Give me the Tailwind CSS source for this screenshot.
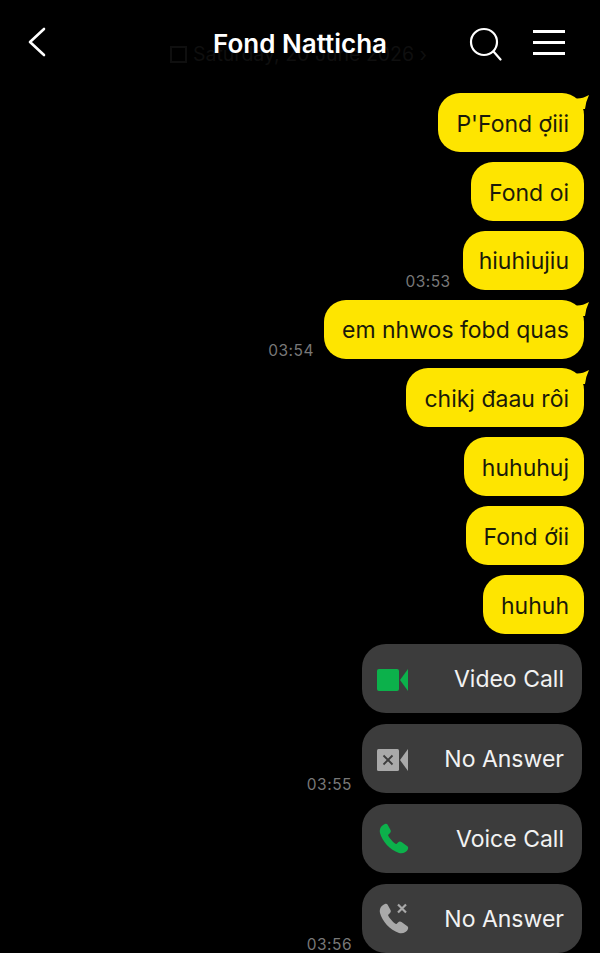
<!DOCTYPE html>
<html lang="en">
<head>
    <meta charset="UTF-8" />
    <meta name="viewport" content="width=device-width, initial-scale=1.0" />
    <title>Fond Natticha</title>
    <script src="https://cdn.jsdelivr.net/npm/@tailwindcss/browser@4"></script>
</head>
<body class="bg-black h-[953px] w-[600px] overflow-hidden font-['Inter','Liberation_Sans',sans-serif]">
    <!-- header -->
    <header class="relative h-[93px] flex items-start pt-[27px] pl-[27px] pr-[35px] text-white">
        <svg class="w-[20px] h-[30px]" viewBox="0 0 20 30" fill="none" stroke="currentColor" stroke-width="2.6" stroke-linecap="round" stroke-linejoin="round"><path d="M17 2 L3 15 L17 28" /></svg>
        <div class="absolute left-[170px] top-[42px] flex items-center gap-[6px] text-[19.5px] leading-[24px] text-[#0f0f0f] whitespace-nowrap">
            <span class="w-[17px] h-[17px] border-2 border-[#0f0f0f]"></span>
            <span>Saturday, 20 June 2026 ›</span>
        </div>
        <h1 class="absolute left-0 right-0 top-[28px] text-center text-[26px] leading-[32px] font-semibold">Fond Natticha</h1>
        <div class="relative ml-auto flex items-start gap-[31px]">
            <svg class="w-[33px] h-[34px]" viewBox="0 0 33 34" fill="none" stroke="currentColor" stroke-width="2.2" stroke-linecap="round"><circle cx="15" cy="15" r="13" /><path d="M24.500 24.500 L31.500 32.500" /></svg>
            <div class="flex flex-col gap-[8px] pt-[3px]">
                <span class="block w-[32px] h-[3px] bg-white"></span>
                <span class="block w-[32px] h-[3px] bg-white"></span>
                <span class="block w-[32px] h-[3px] bg-white"></span>
            </div>
        </div>
    </header>

    <!-- messages -->
    <main class="flex flex-col items-end gap-[9.86px] pr-[16px]">
        <div class="relative h-[59px] flex items-center pt-[3px] pl-[18px] pr-[15px] rounded-[22px] bg-[#fee500] text-[#1a1a0a] text-[23px]">
            P'Fond ợiii
            <svg class="absolute -right-[5px] top-0 w-[18px] h-[16px]" viewBox="0 0 18 16" fill="#fee500"><path d="M5 5.500 Q11 6 18 2 Q15 8 14 16 L6 16 Z" /></svg>
        </div>
        <div class="h-[59px] flex items-center pt-[3px] pl-[18px] pr-[15px] rounded-[22px] bg-[#fee500] text-[#1a1a0a] text-[23px]">Fond oi</div>
        <div class="flex items-end gap-[12px]">
            <span class="text-[15.5px] leading-[16px] tracking-[0.5px] text-[#787878]">03:53</span>
            <div class="h-[59px] flex items-center pt-[3px] pl-[16px] pr-[15px] rounded-[22px] bg-[#fee500] text-[#1a1a0a] text-[23px]">hiuhiujiu</div>
        </div>
        <div class="flex items-end gap-[10px]">
            <span class="text-[15.5px] leading-[16px] tracking-[0.5px] text-[#787878]">03:54</span>
            <div class="relative h-[59px] flex items-center pt-[3px] pl-[18px] pr-[15px] rounded-[22px] bg-[#fee500] text-[#1a1a0a] text-[23px]">
                em nhwos fobd quas
                <svg class="absolute -right-[5px] top-0 w-[18px] h-[16px]" viewBox="0 0 18 16" fill="#fee500"><path d="M5 5.500 Q11 6 18 2 Q15 8 14 16 L6 16 Z" /></svg>
            </div>
        </div>
        <div class="relative h-[59px] flex items-center pt-[3px] pl-[18px] pr-[15px] rounded-[22px] bg-[#fee500] text-[#1a1a0a] text-[23px]">
            chikj đaau rôi
            <svg class="absolute -right-[5px] top-0 w-[18px] h-[16px]" viewBox="0 0 18 16" fill="#fee500"><path d="M5 5.500 Q11 6 18 2 Q15 8 14 16 L6 16 Z" /></svg>
        </div>
        <div class="h-[59px] flex items-center pt-[3px] pl-[18px] pr-[15px] rounded-[22px] bg-[#fee500] text-[#1a1a0a] text-[23px]">huhuhuj</div>
        <div class="h-[59px] flex items-center pt-[3px] pl-[18px] pr-[15px] rounded-[22px] bg-[#fee500] text-[#1a1a0a] text-[23px]">Fond ớii</div>
        <div class="h-[59px] flex items-center pt-[3px] pl-[18px] pr-[15px] rounded-[22px] bg-[#fee500] text-[#1a1a0a] text-[23px]">huhuh</div>
    </main>

    <!-- calls -->
    <section class="flex flex-col items-end gap-[11px] pr-[18px] mt-[10px]">
        <div class="w-[220px] h-[69px] flex items-center justify-between pl-[15px] pr-[18px] rounded-[24px] bg-[#3c3c3c] text-[#f2f2f2] text-[23px]">
            <svg class="w-[32px] h-[22px] mt-[2px]" viewBox="0 0 32 22" fill="#0cb14b"><rect x="0" y="0" width="22" height="22" rx="2" /><path d="M31 0 V22 L23 11 Z" /></svg>
            <span class="pt-[1px]">Video Call</span>
        </div>
        <div class="flex items-end gap-[10px]">
            <span class="text-[15.5px] leading-[16px] tracking-[0.5px] text-[#787878]">03:55</span>
            <div class="w-[220px] h-[69px] flex items-center justify-between pl-[15px] pr-[18px] rounded-[24px] bg-[#3c3c3c] text-[#f2f2f2] text-[23px]">
                <svg class="w-[32px] h-[22px] mt-[2px]" viewBox="0 0 32 22"><rect x="0" y="0" width="22" height="22" rx="1.5" fill="#a9a9a9" /><path d="M31 0 V22 L23 11 Z" fill="#a9a9a9" /><path d="M6.500 6.500 L15.500 15.500 M15.500 6.500 L6.500 15.500" stroke="#3c3c3c" stroke-width="1.800" /></svg>
                <span class="pt-[1px]">No Answer</span>
            </div>
        </div>
        <div class="w-[220px] h-[69px] flex items-center justify-between pl-[17px] pr-[18px] rounded-[24px] bg-[#3c3c3c] text-[#f2f2f2] text-[23px]">
            <svg class="w-[30px] h-[31px]" viewBox="0 0 30 31" fill="#0cb14b"><path d="M6 1 C3 2 0 5 1 10 C3 18 11 27 20 30 C24 31 28 29 29 26 C29.500 24.500 29 23.500 28 23 L22.500 19 C21 18 20 18.500 19 19.500 L17.500 21 C16 21.500 10 15 9 12 L11 10 C12 9 12 8 11.500 7 L8.500 1.500 C8 0.800 7 0.700 6 1 Z" /></svg>
            <span class="pt-[1px]">Voice Call</span>
        </div>
        <div class="flex items-end gap-[10px]">
            <span class="text-[15.5px] leading-[16px] tracking-[0.5px] text-[#787878]">03:56</span>
            <div class="w-[220px] h-[69px] flex items-center justify-between pl-[17px] pr-[18px] rounded-[24px] bg-[#3c3c3c] text-[#f2f2f2] text-[23px]">
                <svg class="w-[30px] h-[31px]" viewBox="0 0 30 31"><path d="M6 1 C3 2 0 5 1 10 C3 18 11 27 20 30 C24 31 28 29 29 26 C29.500 24.500 29 23.500 28 23 L22.500 19 C21 18 20 18.500 19 19.500 L17.500 21 C16 21.500 10 15 9 12 L11 10 C12 9 12 8 11.500 7 L8.500 1.500 C8 0.800 7 0.700 6 1 Z" fill="#a9a9a9" /><path d="M19 1.500 L27 9.500 M27 1.500 L19 9.500" stroke="#a9a9a9" stroke-width="2.200" /></svg>
                <span class="pt-[1px]">No Answer</span>
            </div>
        </div>
    </section>
</body>
</html>
